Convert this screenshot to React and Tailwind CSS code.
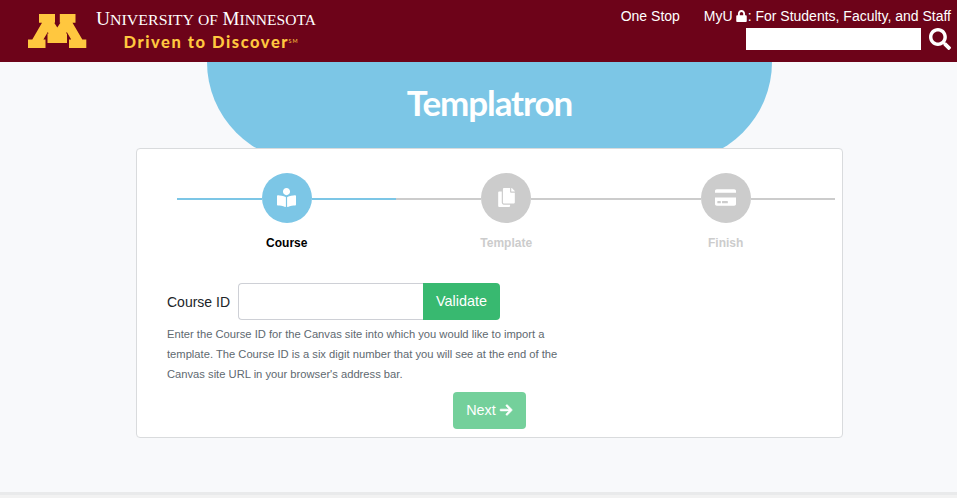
import { FaLock, FaSearch, FaCopy, FaBookReader, FaCreditCard } from "react-icons/fa";
import { FaArrowRight } from "react-icons/fa6";

function Logo() {
  return (
    <svg className="block" width="330" height="62" viewBox="0 0 330 62">
      <path
        fill="#ffc73f"
        d="M39 14H55V22.8H54.2L57.3 27.5L60.4 22.8H59.8V14H75.5V22.8H72.5L82.3 39.5H86.3V48H69V39.5H71.2L66.8 32L66 33.4H67V43H47.5V33.4H48.6L47.8 32L43.4 39.5H45.5V48H28V39.5H32.3L42 22.8H39Z"
      />
      <g fill="#fff" fontFamily="'Liberation Serif', serif">
        <text x="96" y="25" fontSize="19" textLength="98" lengthAdjust="spacingAndGlyphs">
          U<tspan fontSize="15.5">NIVERSITY</tspan>
        </text>
        <text x="198" y="25" fontSize="15.5" textLength="20" lengthAdjust="spacingAndGlyphs">OF</text>
        <text x="222.5" y="25" fontSize="19" textLength="93.5" lengthAdjust="spacingAndGlyphs">
          M<tspan fontSize="15.5">INNESOTA</tspan>
        </text>
      </g>
      <g fill="#ffc73f" fontFamily="Lato, sans-serif">
        <text x="123.5" y="48" fontSize="16.5" fontWeight="900" textLength="164">Driven to Discover</text>
        <text x="288.5" y="43" fontSize="5.5" textLength="9">SM</text>
      </g>
    </svg>
  );
}

function Step({ icon: Icon, size, label, active }) {
  return (
    <div className={`flex flex-1 flex-col items-center ${active ? "text-black" : "text-[#ccc]"}`}>
      <div className="flex w-full items-center">
        <span className={`mt-[2px] h-[2px] flex-1 ${active ? "bg-[#7cc6e6]" : "bg-[#ccc]"}`} />
        <span className={`flex size-[50px] items-center justify-center rounded-full pb-[2px] text-white ${active ? "bg-[#7cc6e6]" : "bg-[#ccc]"}`}>
          <Icon size={size} />
        </span>
        <span className={`mt-[2px] h-[2px] flex-1 ${active ? "bg-[#7cc6e6]" : "bg-[#ccc]"}`} />
      </div>
      <span className="mt-[11px] text-[12px] leading-[18px] font-bold">{label}</span>
    </div>
  );
}

export default function App() {
  return (
    <div className="flex h-[498px] w-[957px] flex-col overflow-hidden bg-[#f8f9fb] font-['Liberation_Sans',Arial,sans-serif]">
      <header className="flex h-[62px] shrink-0 justify-between bg-[#6d0319]">
        <Logo />
        <div className="flex flex-col items-end pt-[7px] pr-[6px] text-white">
          <nav className="flex h-[19px] items-center gap-6 text-[14px] whitespace-nowrap">
            <a>One Stop</a>
            <a className="flex items-center">
              MyU<FaLock size={12} className="mr-[1px] ml-[3px] -mt-[2px] w-[11px]" />: For Students, Faculty, and Staff
            </a>
          </nav>
          <form className="mt-[2px] flex gap-2">
            <input className="h-[22px] w-[175px] bg-white" />
            <FaSearch size={22} />
          </form>
        </div>
      </header>

      <div className="flex flex-col items-center pl-[22px]">
        <div className="flex h-[100px] w-[565px] justify-center rounded-b-[100px] bg-[#7cc6e6] pt-[17px]">
          <h1 className="font-[Lato,sans-serif] text-[35px] leading-[46px] font-bold tracking-[-1.1px] text-white">Templatron</h1>
        </div>

        <main className="-mt-[14px] h-[290px] w-[707px] rounded-[4px] border border-[#d9dbdd] bg-white pt-6">
          <div className="ml-10 flex w-[658.4px]">
            <Step icon={FaBookReader} size={19} label="Course" active />
            <Step icon={FaCopy} size={19} label="Template" />
            <Step icon={FaCreditCard} size={21} label="Finish" />
          </div>
          <div className="mt-[31px] ml-[30px] flex h-[37px] items-center text-[14px]">
            <label className="w-[71px] pt-[2px] whitespace-nowrap text-[#212529]">Course ID</label>
            <input className="h-[37px] w-[185px] rounded-l-[4px] border border-r-0 border-[#ced0d6] bg-white" />
            <button className="h-[37px] w-[77px] rounded-r-[4px] bg-[#38b970] text-[14.4px] text-white">Validate</button>
          </div>
          <p className="mt-[4px] ml-[30px] text-[11.2px] leading-[20px] whitespace-nowrap text-[#606970]">
            Enter the Course ID for the Canvas site into which you would like to import a<br />
            template. The Course ID is a six digit number that you will see at the end of the<br />
            Canvas site URL in your browser's address bar.
          </p>
          <button className="mx-auto mt-[8px] flex h-[37px] w-[73px] items-center justify-center gap-[3px] rounded-[4px] bg-[#74d09b] text-[14.4px] text-white">
            Next <FaArrowRight size={14} strokeWidth={24} className="-mt-[2px]" />
          </button>
        </main>
      </div>

      <footer className="mt-auto h-[6px] shrink-0 border-t-[3px] border-[#e9eaeb] bg-[#f2f2f2]" />
    </div>
  );
}
